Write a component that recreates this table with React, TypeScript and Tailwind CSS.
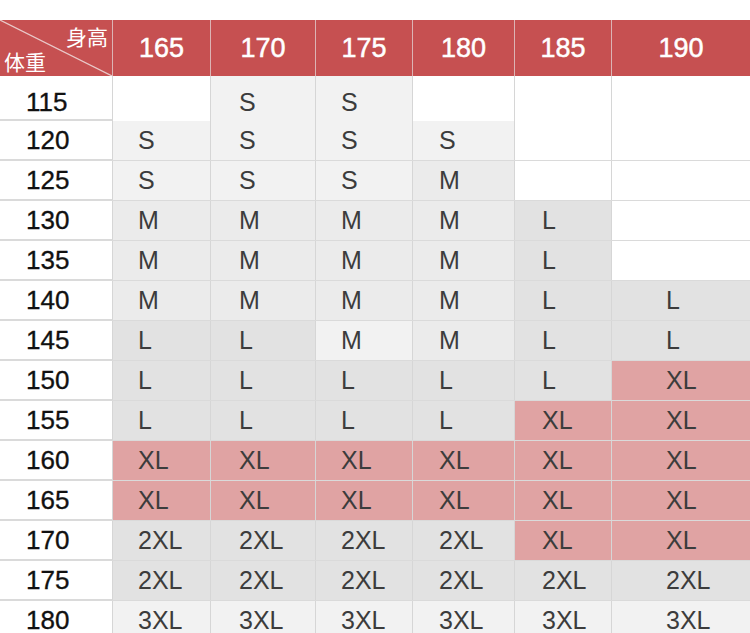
import React from "react";

type Tone = "w" | "a" | "b" | "c" | "p";

const heights = ["165", "170", "175", "180", "185", "190"];

// 每列文字的左边距（参考图里尺码不是居中的）
const padClass = ["pl-[25px]", "pl-[28px]", "pl-[25px]", "pl-[26px]", "pl-[27px]", "pl-[54px]"];

const toneClass: Record<Tone, string> = {
  w: "bg-white",
  a: "bg-[#f2f2f2]",
  b: "bg-[#ebebeb]",
  c: "bg-[#e2e2e2]",
  p: "bg-[#e0a3a3]",
};

type Cell = [string, Tone];

const rows: { weight: string; cells: Cell[] }[] = [
  { weight: "115", cells: [["", "w"], ["S", "a"], ["S", "a"], ["", "w"], ["", "w"], ["", "w"]] },
  { weight: "120", cells: [["S", "a"], ["S", "a"], ["S", "a"], ["S", "a"], ["", "w"], ["", "w"]] },
  { weight: "125", cells: [["S", "a"], ["S", "a"], ["S", "a"], ["M", "b"], ["", "w"], ["", "w"]] },
  { weight: "130", cells: [["M", "b"], ["M", "b"], ["M", "b"], ["M", "b"], ["L", "c"], ["", "w"]] },
  { weight: "135", cells: [["M", "b"], ["M", "b"], ["M", "b"], ["M", "b"], ["L", "c"], ["", "w"]] },
  { weight: "140", cells: [["M", "b"], ["M", "b"], ["M", "b"], ["M", "b"], ["L", "c"], ["L", "c"]] },
  { weight: "145", cells: [["L", "c"], ["L", "c"], ["M", "a"], ["M", "b"], ["L", "c"], ["L", "c"]] },
  { weight: "150", cells: [["L", "c"], ["L", "c"], ["L", "c"], ["L", "c"], ["L", "c"], ["XL", "p"]] },
  { weight: "155", cells: [["L", "c"], ["L", "c"], ["L", "c"], ["L", "c"], ["XL", "p"], ["XL", "p"]] },
  { weight: "160", cells: [["XL", "p"], ["XL", "p"], ["XL", "p"], ["XL", "p"], ["XL", "p"], ["XL", "p"]] },
  { weight: "165", cells: [["XL", "p"], ["XL", "p"], ["XL", "p"], ["XL", "p"], ["XL", "p"], ["XL", "p"]] },
  { weight: "170", cells: [["2XL", "c"], ["2XL", "c"], ["2XL", "c"], ["2XL", "c"], ["XL", "p"], ["XL", "p"]] },
  { weight: "175", cells: [["2XL", "c"], ["2XL", "c"], ["2XL", "c"], ["2XL", "c"], ["2XL", "c"], ["2XL", "c"]] },
  { weight: "180", cells: [["3XL", "a"], ["3XL", "a"], ["3XL", "a"], ["3XL", "a"], ["3XL", "a"], ["3XL", "a"]] },
];

const grid = "grid grid-cols-[113px_98px_105px_97px_102px_97px_138px]";

export default function App() {
  return (
    <div className="w-[750px] h-[633px] overflow-hidden bg-white pt-[20px] font-['Liberation_Sans',Arial,sans-serif]">
      {/* 表头 */}
      <div className={`${grid} h-[56px] bg-[#c65051] text-white`}>
        <div className="relative border-r border-[#dcb4b4] font-['Noto_Sans_CJK_SC',sans-serif] text-[21px] leading-none">
          <svg className="absolute inset-0" width="112" height="56" viewBox="0 0 112 56">
            <line x1="0" y1="0" x2="112" y2="56" stroke="#e9c9c9" strokeWidth="1.2" />
          </svg>
          <span className="absolute right-[4px] top-[6px]">身高</span>
          <span className="absolute left-[4px] bottom-[4px]">体重</span>
        </div>
        {heights.map((h, i) => (
          <div
            key={h}
            className={`flex items-center justify-center text-[27px] [-webkit-text-stroke:0.5px_white] ${
              i < 5 ? "border-r border-[#dcb4b4]" : ""
            }`}
          >
            {h}
          </div>
        ))}
      </div>

      {/* 数据行 */}
      {rows.map((r, ri) => {
        const first = ri === 0 ? "pt-[7px]" : "";
        return (
          <div
            key={r.weight}
            className={`${grid} ${ri === 0 ? "h-[45px]" : "h-[40px]"} border-b-2 border-[#dadada]`}
          >
            <div
              className={`flex items-center pl-[26px] ${first} border-r border-[#d6d6d6] text-[26px] text-[#111] [-webkit-text-stroke:0.35px_#111]`}
            >
              {r.weight}
            </div>
            {r.cells.map(([t, tone], ci) => (
              <div
                key={ci}
                className={`flex items-center ${padClass[ci]} ${first} ${toneClass[tone]} text-[25px] text-[#3c3c3c] ${
                  ci < 5 ? "border-r border-[#d6d6d6]" : ""
                }`}
              >
                {t}
              </div>
            ))}
          </div>
        );
      })}
    </div>
  );
}
